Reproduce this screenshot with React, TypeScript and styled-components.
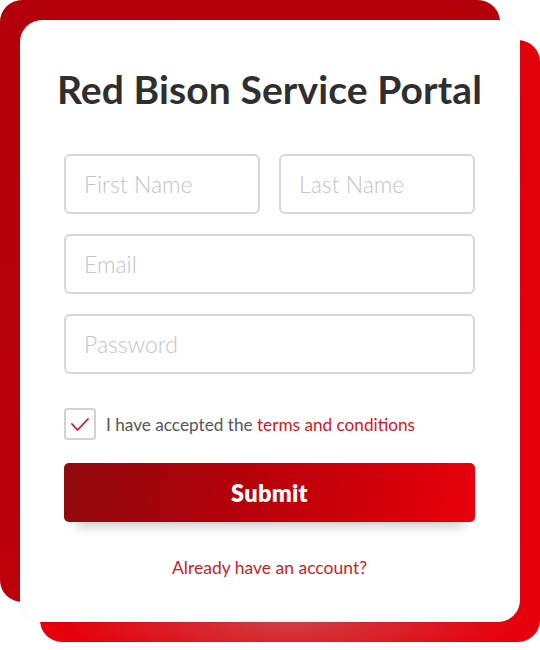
import { useState } from 'react';
import styled, { createGlobalStyle } from 'styled-components';

const GlobalStyle = createGlobalStyle`
    html, body {
        margin: 0;
        padding: 0;
        background: #ffffff;
    }
    body {
        font-family: 'Lato', 'Open Sans', sans-serif;
    }
    * {
        box-sizing: border-box;
    }
`;

const Stage = styled.div`
    position: relative;
    width: 540px;
    height: 650px;
    padding: 20px;
    &:before,
    &:after {
        content: '';
        position: absolute;
        width: 500px;
        height: 602px;
        border-radius: 22px;
        z-index: 0;
    }
    &:before {
        top: 0;
        left: 0;
        background: linear-gradient(160deg, #b3000b 0%, #b8000a 60%, #c3000b 100%);
    }
    &:after {
        top: 40px;
        left: 40px;
        background: radial-gradient(ellipse 45% 7% at 50% 97%, rgba(205, 70, 74, 0.9) 0%, rgba(230, 0, 10, 0) 100%),
            linear-gradient(160deg, #e3000b 0%, #e6000c 100%);
    }
`;

const Card = styled.div`
    position: relative;
    z-index: 1;
    width: 500px;
    height: 602px;
    background: #ffffff;
    border-radius: 22px;
    box-shadow: 0 0 2px rgba(0, 0, 0, 0.08);
    padding: 46px 45px 0 44px;
    display: flex;
    flex-direction: column;
`;

const Title = styled.h1`
    margin: 0 -30px 42px;
    white-space: nowrap;
    text-align: center;
    font-size: 39px;
    line-height: 46px;
    font-weight: 700;
    color: #2f2f2f;
    letter-spacing: 0.1px;
`;

const Row = styled.div`
    display: grid;
    grid-template-columns: 1fr 1fr;
    gap: 19px;
`;

const Fields = styled.div`
    display: flex;
    flex-direction: column;
    gap: 20px;
`;

const Input = styled.input`
    width: 100%;
    height: 60px;
    border: 2px solid #d6d6d6;
    border-radius: 6px;
    padding: 0 18px;
    font-family: 'Lato', sans-serif;
    font-weight: 300;
    font-size: 23px;
    color: #333;
    outline: none;
    &::placeholder {
        color: #c4c4c4;
    }
`;

const CheckRow = styled.label`
    display: flex;
    align-items: center;
    gap: 10px;
    margin-top: 34px;
    font-size: 17.2px;
    color: #555555;
    cursor: pointer;
`;

const Box = styled.span<{ $checked: boolean }>`
    width: 32px;
    height: 32px;
    border: 2px solid #d2d2d2;
    border-radius: 4px;
    display: flex;
    align-items: center;
    justify-content: center;
    flex-shrink: 0;
    svg {
        opacity: ${({ $checked }) => ($checked ? 1 : 0)};
    }
`;

const Link = styled.a`
    color: #d8141c;
    text-decoration: none;
`;

const Submit = styled.button`
    margin-top: 23px;
    height: 59px;
    border: none;
    border-radius: 5px;
    background: linear-gradient(100deg, #8f0a0e 0%, #b6000a 45%, #e8000b 100%);
    color: #ffffff;
    font-family: 'Lato', sans-serif;
    font-weight: 800;
    font-size: 23.5px;
    letter-spacing: 0.3px;
    box-shadow: 0 16px 12px -12px rgba(0, 0, 0, 0.22);
    cursor: pointer;
`;

const Footer = styled.a`
    margin-top: 35px;
    text-align: center;
    font-size: 17.5px;
    color: #cc1c26;
    text-decoration: none;
`;

export default function App() {
    const [checked, setChecked] = useState(true);
    return (
        <>
            <GlobalStyle />
            <Stage>
                <Card>
                    <Title>Red Bison Service Portal</Title>
                    <Fields>
                        <Row>
                            <Input placeholder="First Name" />
                            <Input placeholder="Last Name" />
                        </Row>
                        <Input placeholder="Email" type="email" />
                        <Input placeholder="Password" type="password" />
                    </Fields>
                    <CheckRow onClick={() => setChecked(!checked)}>
                        <Box $checked={checked}>
                            <svg width="20" height="15" viewBox="0 0 20 15">
                                <path
                                    d="M2 7 L7.5 13 L18 2"
                                    fill="none"
                                    stroke="#d8141c"
                                    strokeWidth="1.8"
                                    strokeLinecap="round"
                                    strokeLinejoin="round"
                                />
                            </svg>
                        </Box>
                        <span>
                            I have accepted the <Link href="#">terms and conditions</Link>
                        </span>
                    </CheckRow>
                    <Submit type="button">Submit</Submit>
                    <Footer href="#">Already have an account?</Footer>
                </Card>
            </Stage>
        </>
    );
}
